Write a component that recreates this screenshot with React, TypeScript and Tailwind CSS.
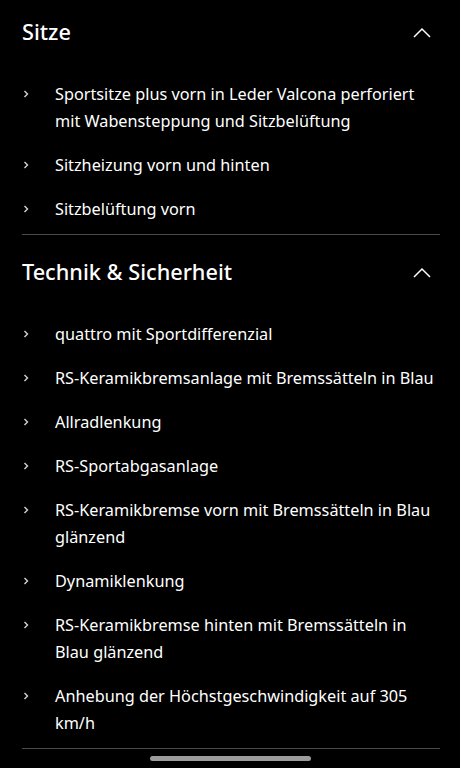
import React from 'react';

type Section = { title: string; items: string[] };

const sections: Section[] = [
  {
    title: 'Sitze',
    items: [
      'Sportsitze plus vorn in Leder Valcona perforiert mit Wabensteppung und Sitzbelüftung',
      'Sitzheizung vorn und hinten',
      'Sitzbelüftung vorn',
    ],
  },
  {
    title: 'Technik & Sicherheit',
    items: [
      'quattro mit Sportdifferenzial',
      'RS-Keramikbremsanlage mit Bremssätteln in Blau',
      'Allradlenkung',
      'RS-Sportabgasanlage',
      'RS-Keramikbremse vorn mit Bremssätteln in Blau glänzend',
      'Dynamiklenkung',
      'RS-Keramikbremse hinten mit Bremssätteln in Blau glänzend',
      'Anhebung der Höchstgeschwindigkeit auf 305 km/h',
    ],
  },
];

const ChevronUp = () => (
  <svg width="18" height="11" viewBox="0 0 18 11" fill="none" className="shrink-0">
    <path d="M1 10L9 2L17 10" stroke="#fff" strokeWidth="1.5" />
  </svg>
);

const Bullet = () => (
  <svg width="6" height="8" viewBox="0 0 6 8" fill="none" className="shrink-0 mt-[9px]">
    <path d="M1.5 1L4.5 4L1.5 7" stroke="#d4d4d4" strokeWidth="1.4" />
  </svg>
);

const SpecSection = ({ section }: { section: Section }) => (
  <section className="border-b border-[#4a4a4a]">
    <header className="flex items-center justify-between pt-[22px] pb-[25px]">
      <h2 className="text-[21.7px] leading-[30px] font-medium text-white">{section.title}</h2>
      <div className="pr-[9px]">
        <ChevronUp />
      </div>
    </header>
    <ul className="pb-[3px]">
      {section.items.map((item) => (
        <li key={item} className="flex py-[8.5px]">
          <div className="w-[33px] pl-[1px]">
            <Bullet />
          </div>
          <span className="-mr-[2px] flex-1 text-[16.25px] leading-[27px] text-white">{item}</span>
        </li>
      ))}
    </ul>
  </section>
);

export default function App() {
  return (
    <div
      className="relative h-[768px] overflow-hidden bg-black"
      style={{ fontFamily: '"Noto Sans", "Open Sans", sans-serif' }}
    >
      <div className="-mt-[5px] pl-[22px] pr-[20px]">
        {sections.map((s) => (
          <SpecSection key={s.title} section={s} />
        ))}
      </div>
      <div className="absolute bottom-[7px] left-[150px] h-[5px] w-[161px] rounded-full bg-[#9b9b9b]" />
    </div>
  );
}
